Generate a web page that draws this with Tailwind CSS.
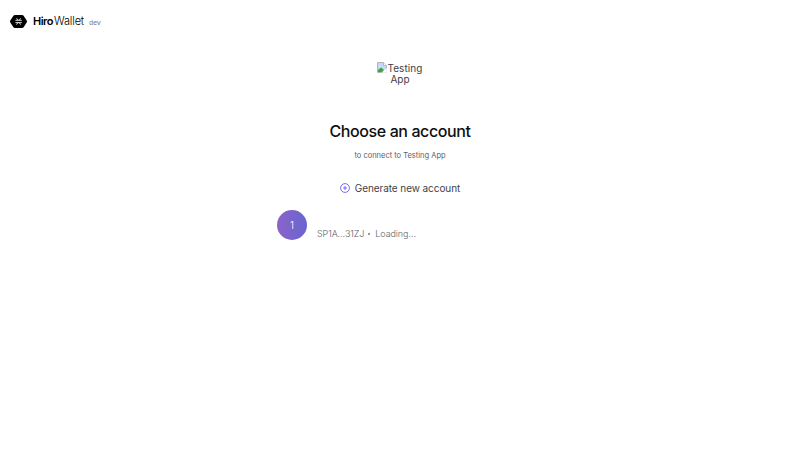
<!DOCTYPE html>
<html lang="en">
<head>
<meta charset="utf-8">
<title>Hiro Wallet</title>
<script src="https://cdn.jsdelivr.net/npm/@tailwindcss/browser@4"></script>
</head>
<body class="bg-white font-['Inter',sans-serif] text-[#3f4045] h-screen overflow-hidden flex flex-col">
<header class="h-[42px] shrink-0 pl-[10px] flex items-center">
  <svg class="w-[17px] h-[13px] shrink-0" viewBox="0 0 17 13"><path d="M4.9 0h7.2q1 0 1.5.8l3.1 4.8q.5.9 0 1.8l-3.1 4.8q-.5.8-1.5.8H4.9q-1 0-1.5-.8L.3 7.4q-.5-.9 0-1.8L3.4.8Q3.9 0 4.9 0z" fill="#000"/><path d="M5.4 5.3h6.4M5.4 7.6h6.4M6.6 3.3l1.3 2M10.6 3.3 9.3 5.3M7.9 7.6 6.6 9.6M9.3 7.6l1.3 2" stroke="#fff" stroke-width=".85" fill="none"/></svg>
  <div class="ml-[6px] mt-[2px] flex items-baseline text-black whitespace-nowrap leading-4">
    <span class="w-[20px] text-[11px] font-semibold tracking-[-0.5px]">Hiro</span>
    <span class="w-[31px] ml-[1px] text-[11px] font-light tracking-[-0.15px]">Wallet</span>
    <span class="ml-[4px] text-[7px] text-[#74777d] font-['Liberation_Mono',monospace] tracking-[-0.3px]">dev</span>
  </div>
</header>
<main class="flex flex-col items-center">
  <div class="mt-[20px] w-[50px] h-[50px] text-center text-[10px] leading-[11px] flex flex-col items-center">
    <div class="flex h-[12px] items-start">
      <svg class="w-[10px] h-[11px] shrink-0" viewBox="0 0 10 11"><path d="M.5.5h6l3 3v7h-9z" fill="#c4d9f5" stroke="#a4a7ab" stroke-width=".8"/><path d="M6.5.5v3h3" fill="#fff" stroke="#a4a7ab" stroke-width=".7"/><path d="M2 4.5q1-1.6 2 0z" fill="#fff"/><path d="M1 10V8l3-2.5L7 8l-2 2z" fill="#43a047"/><path d="M4.8 10.8 9.8 6v4.8z" fill="#fff"/></svg>
      <span class="mt-px tracking-[0.08px]">Testing</span>
    </div>
    <span>App</span>
  </div>
  <h1 class="mt-[7px] h-[24px] text-[16px] leading-6 font-medium tracking-[-0.4px] text-[#0f0f12]">Choose an account</h1>
  <p class="mt-[5px] h-4 text-[7.5px] leading-4 text-[#5b5e66]">to connect to Testing App</p>
  <button class="mt-[16px] h-4 flex items-center gap-[5px] text-[10px] leading-4 tracking-[-0.08px] text-[#424248]">
    <svg class="w-[10px] h-[10px]" viewBox="0 0 10 10" fill="none" stroke="#5546e8" stroke-width=".8"><circle cx="5" cy="5" r="4.4"/><path d="M5 3.1v3.8M3.1 5h3.8"/></svg>
    <span>Generate new account</span>
  </button>
  <section class="mt-[14px] w-[246px] flex">
    <div class="w-[30px] h-[30px] rounded-full bg-linear-to-r from-[#8b63c8] to-[#6865d0] text-white text-[10px] font-light flex items-center justify-center">1</div>
    <div class="ml-[10px] mt-[16px] flex items-center h-4 text-[9px] leading-4 font-light tracking-[-0.08px] text-[#62656b] whitespace-nowrap"><span>SP1A…31ZJ</span><span class="ml-[4px] mr-[5px] w-[2px] h-[2px] rounded-full bg-[#74777d]"></span><span>Loading…</span></div>
  </section>
</main>
</body>
</html>
